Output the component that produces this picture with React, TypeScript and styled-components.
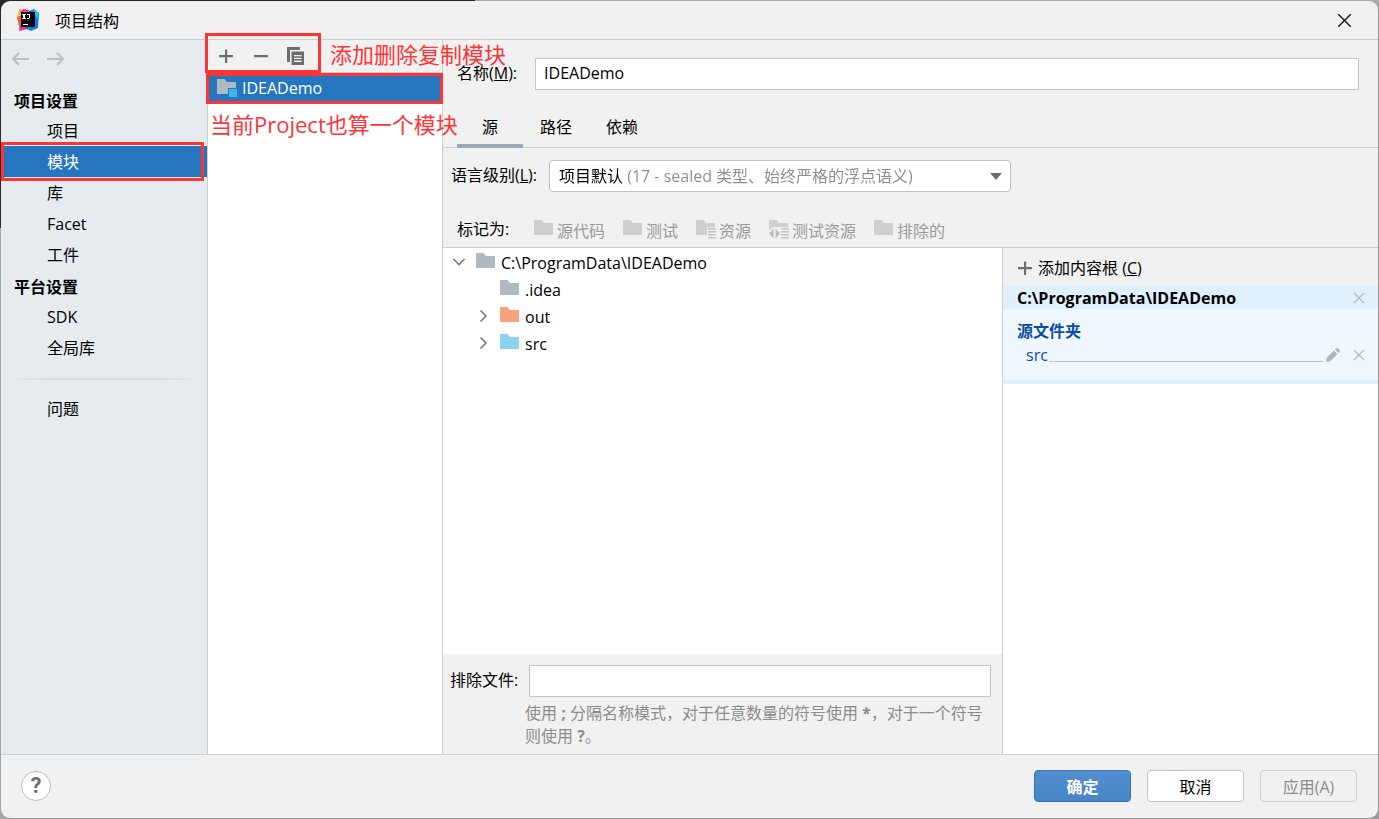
import React, { useState } from "react";
import styled, { createGlobalStyle, css } from "styled-components";

const color = {
  panel: "#f1f1f1",
  side: "#e5ebef",
  line: "#cfcfcf",
  select: "#2675bf",
  mark: "#fd3537",
  muted: "#8c8c8c",
  icon: "#6e6e6e",
};

const GlobalStyle = createGlobalStyle`
  *, *::before, *::after { box-sizing: border-box; }
  body {
    margin: 0;
    font-family: "Open Sans", "Noto Sans CJK SC", sans-serif;
    font-size: 16px;
    line-height: 24px;
    color: #000;
  }
  button, input, select { font: inherit; color: inherit; margin: 0; }
  h1, h2, h3, ul, p { margin: 0; padding: 0; font: inherit; }
  ul { list-style: none; }
  svg { display: block; flex: none; }
`;

const Desktop = styled.div`
  min-height: 100vh;
  padding: 1px;
  display: flex;
  background:
    linear-gradient(90deg, #2a2628 475px, #a8a8a8 475px) top / 100% 10px no-repeat,
    linear-gradient(#2a2b2e 228px, #a6a6a6 228px) left / 10px 100% no-repeat,
    #9a9a9a;
`;

const Window = styled.div`
  flex: 1;
  min-width: 0;
  display: flex;
  flex-direction: column;
  background: ${color.panel};
  border-radius: 9px;
  overflow: hidden;
`;

const TitleBar = styled.header`
  height: 39px;
  flex: none;
  display: flex;
  align-items: center;
  padding: 0 26px 0 15px;
  border-bottom: 1px solid ${color.line};
`;

const Title = styled.h1`
  flex: 1;
  padding: 2px 0 0 15px;
`;

const IconButton = styled.button`
  display: flex;
  align-items: center;
  justify-content: center;
  padding: 0;
  border: 0;
  background: none;
`;

const Body = styled.div`
  flex: 1;
  display: grid;
  grid-template-columns: 207px 235px minmax(0, 1fr);
`;

const Sidebar = styled.nav`
  background: ${color.side};
  border-right: 1px solid ${color.line};
`;

const History = styled.div`
  display: flex;
  gap: 16px;
  height: 44px;
  padding: 9px 9px 0;
  align-items: flex-start;
`;

const GroupTitle = styled.h2`
  height: 31px;
  padding: 5px 0 0 13px;
  font-weight: 700;
`;

const NavItem = styled.button<{ $active?: boolean }>`
  display: block;
  width: 100%;
  height: 31px;
  padding: 0 0 0 46px;
  border: 0;
  text-align: left;
  background: ${(p) => (p.$active ? color.select : "transparent")};
  color: ${(p) => (p.$active ? "#fff" : "#000")};
`;

const NavSlot = styled.li`
  position: relative;
`;

const NavDivider = styled.hr`
  height: 2px;
  margin: 15px 12px 13px;
  border: 0;
  background: linear-gradient(90deg, transparent, #d8d9db 20%, #d8d9db 80%, transparent);
`;

const Modules = styled.section`
  position: relative;
  background: #fff;
  border-right: 1px solid ${color.line};
`;

const ModuleToolbar = styled.div`
  display: flex;
  align-items: center;
  gap: 15px;
  height: 33px;
  padding: 0 8px;
  background: ${color.panel};
  border-bottom: 1px solid ${color.line};

  ${IconButton} { width: 20px; height: 20px; }
`;

const ModuleRow = styled.button`
  display: flex;
  align-items: center;
  gap: 5px;
  width: 100%;
  height: 31px;
  padding: 0 9px 2px;
  border: 0;
  background: ${color.select};
  color: #fff;
`;

const MarkBox = styled.div<{ $box: string; $height?: number }>`
  position: absolute;
  inset: ${(p) => p.$box};
  height: ${(p) => (p.$height ? `${p.$height}px` : "auto")};
  border: 3px solid ${color.mark};
  pointer-events: none;
  z-index: 2;
`;

const MarkText = styled.p<{ $top: number; $left: number }>`
  position: absolute;
  top: ${(p) => p.$top}px;
  left: ${(p) => p.$left}px;
  font-size: 22px;
  line-height: 32px;
  white-space: nowrap;
  color: ${color.mark};
  pointer-events: none;
  z-index: 2;
`;

const Editor = styled.main`
  display: flex;
  flex-direction: column;
  min-width: 0;
`;

const Field = styled.div`
  display: flex;
  align-items: center;
`;

const NameField = styled(Field)`
  padding: 18px 19px 0 14px;
  gap: 18px;
`;

const LevelField = styled(Field)`
  padding: 12px 8px 0;
  gap: 12px;
`;

const Label = styled.label`
  padding-bottom: 2px;
  white-space: nowrap;
`;

const TextInput = styled.input`
  flex: 1;
  min-width: 0;
  height: 32px;
  padding: 0 8px 2px;
  border: 1px solid #c4c4c4;
  background: #fff;
  outline: none;
`;

const Tabs = styled.div`
  display: flex;
  height: 58px;
  padding: 18px 14px 0;
  border-bottom: 1px solid ${color.line};
`;

const Tab = styled.button<{ $active?: boolean }>`
  width: 66px;
  height: 40px;
  padding: 2px 0 0;
  border: 0;
  border-bottom: 4px solid ${(p) => (p.$active ? "#9ba8b9" : "transparent")};
  background: none;
`;

const SelectFrame = styled.div`
  display: flex;
  align-items: center;
  width: 462px;
  height: 32px;
  padding-right: 8px;
  border: 1px solid #c4c4c4;
  border-radius: 4px;
  background: #fff;
`;

const Select = styled.select`
  flex: 1;
  min-width: 0;
  height: 30px;
  padding: 0 9px;
  border: 0;
  appearance: none;
  outline: none;
  color: transparent;
  background: linear-gradient(90deg, #000 76px, ${color.muted} 76px);
  background-clip: text;
  -webkit-background-clip: text;
`;

const MarkAs = styled.div`
  display: flex;
  align-items: center;
  gap: 18px;
  height: 56px;
  padding: 23px 14px 0;
  border-bottom: 1px solid ${color.line};
`;

const MarkLabel = styled.span`
  width: 59px;
  padding-bottom: 4px;
`;

const MarkButton = styled.button`
  display: flex;
  align-items: center;
  gap: 3px;
  padding: 0;
  border: 0;
  background: none;
  color: #9a9a9a;
  white-space: nowrap;

  svg { margin-bottom: 4px; }
`;

const Content = styled.div`
  flex: 1;
  display: grid;
  grid-template-columns: minmax(0, 1fr) 375px;
`;

const TreePane = styled.section`
  display: flex;
  flex-direction: column;
  border-right: 1px solid ${color.line};
`;

const Tree = styled.ul`
  flex: 1;
  padding: 1px 0;
  background: #fff;
`;

const TreeRow = styled.li<{ $level: number }>`
  display: flex;
  align-items: center;
  height: 27px;
  padding-left: ${(p) => 9 + p.$level * 24}px;
  white-space: nowrap;

  svg { margin-bottom: 2px; }
`;

const Twisty = styled(IconButton)`
  width: 14px;
  height: 20px;
  margin-right: 10px;
`;

const TreeName = styled.span`
  padding-left: 5px;
`;

const Exclude = styled.div`
  height: 100px;
  padding: 11px 11px 0 7px;
  display: grid;
  grid-template-columns: 68px minmax(0, 1fr);
  column-gap: 11px;
  align-content: start;
  align-items: center;
`;

const Hint = styled.p`
  grid-column: 2;
  margin: 5px 0 0 -4px;
  line-height: 23px;
  color: ${color.muted};
`;

const Roots = styled.section`
  background: #fff;
`;

const AddRoot = styled.button`
  display: flex;
  align-items: center;
  gap: 5px;
  width: 100%;
  height: 38px;
  padding: 2px 14px 0;
  border: 0;
  background: ${color.panel};
`;

const RootHeader = styled.div`
  display: flex;
  align-items: center;
  justify-content: space-between;
  height: 23px;
  padding: 0 13px 0 14px;
  font-weight: 700;
  background: #dff1fe;
`;

const RootBody = styled.div`
  height: 75px;
  padding: 10px 13px 0 14px;
  background: #f0f8ff;
  border-bottom: 4px solid #dff1fe;
  color: #0b4da2;
`;

const FolderKind = styled.h3`
  font-weight: 700;
`;

const SourceRow = styled.div`
  display: flex;
  align-items: center;
  padding-left: 9px;
`;

const Leader = styled.span`
  flex: 1;
  height: 1px;
  margin: 12px 3px 0 1px;
  background: #bcc3c9;
`;

const Pencil = styled(IconButton)`
  margin-right: 13px;
`;

const Footer = styled.footer`
  display: flex;
  align-items: center;
  gap: 16px;
  height: 64px;
  flex: none;
  padding: 0 21px 2px 20px;
  border-top: 1px solid ${color.line};
`;

const Help = styled.button`
  width: 30px;
  height: 30px;
  margin-right: auto;
  padding: 0;
  border: 1px solid #bdbdbd;
  border-radius: 50%;
  background: #fff;
  color: ${color.icon};
  font-family: Roboto, sans-serif;
  font-size: 22px;
  font-weight: 700;
  line-height: 28px;
`;

const Action = styled.button<{ $kind?: "primary" | "disabled" }>`
  width: 97px;
  height: 32px;
  padding: 2px 0 0;
  border: 1px solid #c4c4c4;
  border-radius: 4px;
  background: #fff;
  ${(p) =>
    p.$kind === "primary" &&
    css`
      border-color: #3a73b5;
      background: linear-gradient(#528dcd, #4a86c7);
      color: #fff;
      font-weight: 700;
    `}
  ${(p) =>
    p.$kind === "disabled" &&
    css`
      border-color: #cfcfcf;
      background: ${color.panel};
      color: ${color.muted};
    `}
`;

const Logo = () => (
  <svg width="24" height="24" viewBox="0 0 24 24">
    <path d="M3 1l6 1 3 5-5 7-6-4z" fill="#fdb94d" />
    <path d="M1 9l5-2 5 9-7 6-1-4z" fill="#f2603c" />
    <path d="M4 17l6-3 2 7-9 2z" fill="#f5347f" />
    <path d="M7 1l6 1-1 5-5 1-3-4z" fill="#ff318c" />
    <path d="M13 3l5-2 5 4-1 15-7 3-6-3z" fill="#087cfa" />
    <path d="M17 1l6 4-2 6z" fill="#21c7f5" />
    <rect x="5" y="4" width="14" height="15" fill="#000" />
    <path d="M6 6h4v1H9v3h1v1H6v-1h1V7H6zM11 6h3v4l-1 1h-2v-1h2V7h-2zM7 16h5v1H7z" fill="#fff" />
  </svg>
);

const Arrow = ({ flip }: { flip?: boolean }) => (
  <svg width="20" height="20" viewBox="0 0 20 20" fill="none" stroke="#bcbfc2" strokeWidth="2">
    <path d={flip ? "M1 10h16M11 4l6 6-6 6" : "M19 10H3M9 4l-6 6 6 6"} />
  </svg>
);

const Cross = ({ size, stroke }: { size: number; stroke: string }) => (
  <svg width={size} height={size} viewBox="0 0 12 12" fill="none" stroke={stroke} strokeWidth="1.1">
    <path d="M1 1l10 10M11 1L1 11" />
  </svg>
);

const Plus = ({ size }: { size: number }) => (
  <svg width={size} height={size} viewBox="0 0 16 16" fill={color.icon}>
    <path d="M7 1.500h2.200V7H15v2.200H9.200V15H7V9.200H1V7h6z" />
  </svg>
);

const Minus = () => (
  <svg width="16" height="16" viewBox="0 0 16 16" fill={color.icon}>
    <path d="M1 7h14v2.200H1z" />
  </svg>
);

const Copy = () => (
  <svg width="18" height="18" viewBox="0 0 18 18" fill={color.icon}>
    <path d="M0 0h13v3H3v12H0z" />
    <path fillRule="evenodd" d="M4.500 4.500H17V18H4.500zM7 8v1.300h7.500V8zm0 2.800v1.300h7.500v-1.300zm0 2.800v1.300h7.500v-1.300z" />
  </svg>
);

type Badge = "module" | "lines" | "test";

const Folder = ({ fill = "#aeb9c0", badge, cut = color.panel }: { fill?: string; badge?: Badge; cut?: string }) => (
  <svg width="20" height="20" viewBox="0 0 20 20">
    <path d="M0 1h7.500L10 4h9v12H0z" fill={fill} />
    {badge === "module" && (
      <>
        <path d="M11 10h9v9h-9z" fill={cut} />
        <path d="M12 11h8v8h-8z" fill="#40b6e0" />
      </>
    )}
    {(badge === "lines" || badge === "test") && (
      <>
        <path d="M11 8h9v12h-9z" fill={cut} />
        <path d="M12 9h8v1.500h-8zM12 12h8v1.500h-8zM12 15h8v1.500h-8zM12 18h8v1.500h-8z" fill="#c3c3c3" />
      </>
    )}
    {badge === "test" && (
      <>
        <path d="M0 8h11v12H0z" fill={cut} />
        <path d="M0 1h7.500L10 4v4L5 7 0 11z" fill={fill} />
        <path d="M4.500 9.500v10L0 14.500zM6.500 9.500v10l4.500-5z" fill="#bdbdbd" />
      </>
    )}
  </svg>
);

const Chevron = ({ open }: { open?: boolean }) => (
  <svg width="14" height="14" viewBox="0 0 14 14" fill="none" stroke="#7a7a7a" strokeWidth="1.600">
    <path d={open ? "M1.500 4L7 9.500 12.500 4" : "M4.500 1.500L10 7l-5.500 5.500"} />
  </svg>
);

const PencilIcon = () => (
  <svg width="14" height="14" viewBox="0 0 14 14" fill="#afb8bf">
    <path d="M0 14l.6-4L8 2.600 11.400 6 4 13.400zM9 1.600L10.600 0q.6-.4 1.200 0L14 2.200q.3.600 0 1.200L12.400 5z" />
  </svg>
);

const nav = [
  { title: "项目设置", items: ["项目", "模块", "库", "Facet", "工件"] },
  { title: "平台设置", items: ["SDK", "全局库"] },
];

const marks: { text: string; badge?: Badge }[] = [
  { text: "源代码" },
  { text: "测试" },
  { text: "资源", badge: "lines" },
  { text: "测试资源", badge: "test" },
  { text: "排除的" },
];

const tree = [
  { name: "C:\\ProgramData\\IDEADemo", level: 0, state: "open" },
  { name: ".idea", level: 1, state: "leaf" },
  { name: "out", level: 1, state: "closed", fill: "#f6a37a" },
  { name: "src", level: 1, state: "closed", fill: "#8bd3ec" },
];

export default function App() {
  const [name, setName] = useState("IDEADemo");
  const [page, setPage] = useState("模块");
  const [tab, setTab] = useState("源");

  return (
    <Desktop>
      <GlobalStyle />
      <Window>
        <TitleBar>
          <Logo />
          <Title>项目结构</Title>
          <IconButton aria-label="关闭">
            <Cross size={15} stroke="#111" />
          </IconButton>
        </TitleBar>

        <Body>
          <Sidebar>
            <History>
              <IconButton aria-label="后退"><Arrow /></IconButton>
              <IconButton aria-label="前进"><Arrow flip /></IconButton>
            </History>
            {nav.map((group) => (
              <React.Fragment key={group.title}>
                <GroupTitle>{group.title}</GroupTitle>
                <ul>
                  {group.items.map((item) => (
                    <NavSlot key={item}>
                      <NavItem $active={item === page} onClick={() => setPage(item)}>{item}</NavItem>
                      {item === "模块" && <MarkBox $box="-4px 3px -4px 0" />}
                    </NavSlot>
                  ))}
                </ul>
              </React.Fragment>
            ))}
            <NavDivider />
            <NavItem $active={page === "问题"} onClick={() => setPage("问题")}>问题</NavItem>
          </Sidebar>

          <Modules>
            <ModuleToolbar>
              <IconButton aria-label="添加"><Plus size={16} /></IconButton>
              <IconButton aria-label="删除"><Minus /></IconButton>
              <IconButton aria-label="复制"><Copy /></IconButton>
            </ModuleToolbar>
            <ModuleRow>
              <Folder badge="module" cut={color.select} />
              IDEADemo
            </ModuleRow>
            <MarkBox $box="-7px 121px auto -3px" $height={40} />
            <MarkBox $box="33px -1px auto -2px" $height={31} />
            <MarkText $top={-2} $left={122}>添加删除复制模块</MarkText>
            <MarkText $top={68} $left={2}>当前Project也算一个模块</MarkText>
          </Modules>

          <Editor>
            <NameField>
              <Label htmlFor="module-name">名称(<u>M</u>):</Label>
              <TextInput id="module-name" value={name} onChange={(e) => setName(e.target.value)} />
            </NameField>
            <Tabs role="tablist">
              {["源", "路径", "依赖"].map((t) => (
                <Tab key={t} role="tab" aria-selected={t === tab} $active={t === tab} onClick={() => setTab(t)}>
                  {t}
                </Tab>
              ))}
            </Tabs>
            <LevelField>
              <Label htmlFor="language-level">语言级别(<u>L</u>):</Label>
              <SelectFrame>
                <Select id="language-level">
                  <option>项目默认 (17 - sealed 类型、始终严格的浮点语义)</option>
                </Select>
                <svg width="12" height="7" viewBox="0 0 12 7" fill={color.icon}>
                  <path d="M0 0h12L6 7z" />
                </svg>
              </SelectFrame>
            </LevelField>
            <MarkAs>
              <MarkLabel>标记为:</MarkLabel>
              {marks.map((m) => (
                <MarkButton key={m.text} disabled>
                  <Folder fill="#cfcfcf" badge={m.badge} />
                  {m.text}
                </MarkButton>
              ))}
            </MarkAs>

            <Content>
              <TreePane>
                <Tree>
                  {tree.map((node) => (
                    <TreeRow key={node.name} $level={node.level}>
                      <Twisty aria-label={node.name}>
                        {node.state !== "leaf" && <Chevron open={node.state === "open"} />}
                      </Twisty>
                      <Folder fill={node.fill} />
                      <TreeName>{node.name}</TreeName>
                    </TreeRow>
                  ))}
                </Tree>
                <Exclude>
                  <Label htmlFor="exclude-files">排除文件:</Label>
                  <TextInput id="exclude-files" />
                  <Hint>
                    使用 <b>;</b> 分隔名称模式，对于任意数量的符号使用 <b>*</b>，对于一个符号则使用 <b>?</b>。
                  </Hint>
                </Exclude>
              </TreePane>

              <Roots>
                <AddRoot>
                  <Plus size={16} />
                  <span>添加内容根 (<u>C</u>)</span>
                </AddRoot>
                <RootHeader>
                  C:\ProgramData\IDEADemo
                  <IconButton aria-label="移除内容根"><Cross size={12} stroke="#afb8bf" /></IconButton>
                </RootHeader>
                <RootBody>
                  <FolderKind>源文件夹</FolderKind>
                  <SourceRow>
                    src
                    <Leader />
                    <Pencil aria-label="编辑"><PencilIcon /></Pencil>
                    <IconButton aria-label="移除"><Cross size={12} stroke="#afb8bf" /></IconButton>
                  </SourceRow>
                </RootBody>
              </Roots>
            </Content>
          </Editor>
        </Body>

        <Footer>
          <Help aria-label="帮助">?</Help>
          <Action $kind="primary">确定</Action>
          <Action>取消</Action>
          <Action $kind="disabled" disabled>应用(A)</Action>
        </Footer>
      </Window>
    </Desktop>
  );
}
